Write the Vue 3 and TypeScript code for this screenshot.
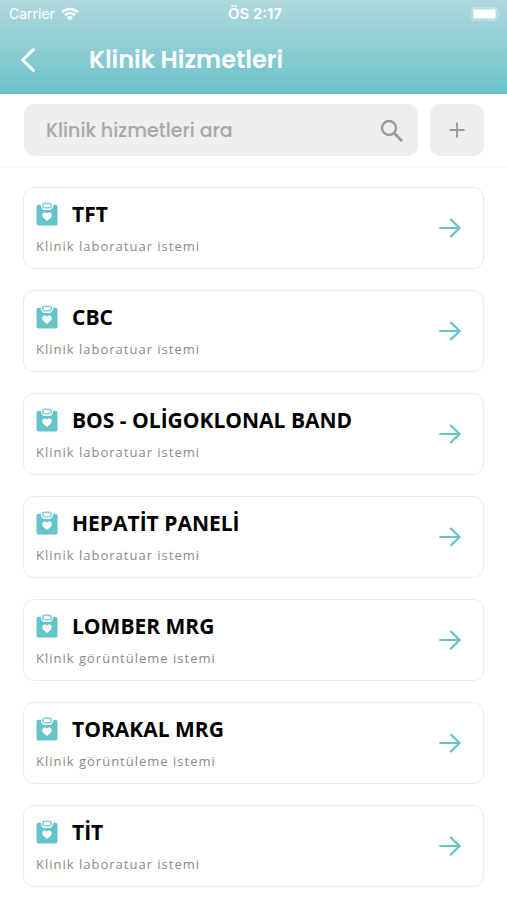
<script setup lang="ts">
import { ref, computed } from 'vue'

interface ClinicService {
  id: number
  name: string
  kind: string
}

const query = ref('')

const services: ClinicService[] = [
  { id: 1, name: 'TFT', kind: 'Klinik laboratuar istemi' },
  { id: 2, name: 'CBC', kind: 'Klinik laboratuar istemi' },
  { id: 3, name: 'BOS - OLİGOKLONAL BAND', kind: 'Klinik laboratuar istemi' },
  { id: 4, name: 'HEPATİT PANELİ', kind: 'Klinik laboratuar istemi' },
  { id: 5, name: 'LOMBER MRG', kind: 'Klinik görüntüleme istemi' },
  { id: 6, name: 'TORAKAL MRG', kind: 'Klinik görüntüleme istemi' },
  { id: 7, name: 'TİT', kind: 'Klinik laboratuar istemi' },
]

const visible = computed(() => {
  const q = query.value.trim().toLocaleLowerCase('tr')
  return services.filter((s) => s.name.toLocaleLowerCase('tr').includes(q))
})
</script>

<template>
  <div class="screen">
    <header class="header">
      <div class="status">
        <span class="carrier">
          Carrier
          <svg class="wifi" viewBox="0 0 18 14" aria-hidden="true">
            <path d="M1.2 5.2a11.2 11.2 0 0 1 15.6 0M4 8.2a7.2 7.2 0 0 1 10 0" fill="none" stroke="currentColor" stroke-width="2.5" />
            <path d="M9 13.6 5.9 10.4a4.4 4.4 0 0 1 6.2 0z" fill="currentColor" />
          </svg>
        </span>
        <span class="clock">ÖS 2:17</span>
        <svg class="battery" viewBox="0 0 30 14" aria-hidden="true">
          <rect x="0.8" y="0.8" width="25.4" height="12.4" rx="3.4" fill="none" stroke="#fff" stroke-opacity=".35" stroke-width="1.2" />
          <rect x="2.4" y="2.4" width="22.2" height="9.2" rx="1.4" fill="#fff" />
          <path d="M27.4 4.8c2 .8 2 3.6 0 4.4z" fill="#fff" fill-opacity=".4" />
        </svg>
      </div>
      <div class="bar">
        <button class="back" type="button" aria-label="Geri">
          <svg viewBox="0 0 16 26" aria-hidden="true">
            <path d="M13.4 2.6 2.6 13l10.8 10.4" fill="none" stroke="currentColor" stroke-width="3" stroke-linecap="round" stroke-linejoin="round" />
          </svg>
        </button>
        <h1 class="title">Klinik Hizmetleri</h1>
      </div>
    </header>

    <div class="search">
      <label class="field">
        <input v-model="query" class="input" type="text" placeholder="Klinik hizmetleri ara" aria-label="Klinik hizmetleri ara" />
        <svg class="lens" viewBox="0 0 24 24" aria-hidden="true">
          <circle cx="9" cy="10" r="7" fill="none" stroke="currentColor" stroke-width="2.4" />
          <path d="m14.2 15.2 8 8" stroke="currentColor" stroke-width="3" />
        </svg>
      </label>
      <button class="add" type="button" aria-label="Ekle">
        <svg viewBox="0 0 16 16" aria-hidden="true">
          <path d="M8 .4v15.2M.4 8h15.2" stroke="currentColor" stroke-width="1.9" />
        </svg>
      </button>
    </div>

    <main class="list">
      <a v-for="s in visible" :key="s.id" class="card" href="#">
        <span class="info">
          <span class="heading">
            <svg class="clip" viewBox="0 0 22 24" aria-hidden="true">
              <path d="M2.6 2.8h2.2C5 6.6 6.8 8 8.8 8h4.4c2 0 3.8-1.4 4-5.2h2.2c1.2 0 2.1.9 2.1 2.1v16.6c0 1.2-.9 2.1-2.1 2.1H2.6C1.4 23.6.5 22.7.5 21.5V4.9c0-1.2.9-2.1 2.1-2.1z" fill="#65c3ca" />
              <rect x="6" y=".6" width="10" height="6" rx="2.4" fill="#65c3ca" fill-opacity=".75" />
              <rect x="7.6" y="2.2" width="6.8" height="2.8" rx="1.1" fill="#fff" />
              <path d="M11 19c-2.5-1.8-4.8-3.5-4.8-5.9 0-2.6 3.4-3.5 4.8-1.3 1.4-2.2 4.8-1.3 4.8 1.3 0 2.4-2.3 4.1-4.8 5.9z" fill="#fff" />
            </svg>
            <span class="name">{{ s.name }}</span>
          </span>
          <span class="kind">{{ s.kind }}</span>
        </span>
        <svg class="arrow" viewBox="0 0 22 20" aria-hidden="true">
          <path d="M1.2 10h19M12 1.6l8.6 8.4-8.6 8.4" fill="none" stroke="currentColor" stroke-width="2.2" stroke-linecap="round" stroke-linejoin="round" />
        </svg>
      </a>
    </main>
  </div>
</template>

<style>
body {
  margin: 0;
  background: #fff;
}
</style>

<style scoped>
.screen {
  min-height: 100vh;
  box-sizing: border-box;
  background: #fff;
  font-family: "Open Sans", "Noto Sans", sans-serif;
}

svg {
  display: block;
  flex: none;
}

.header {
  background: linear-gradient(#b0d9de, #6bc2ca);
  color: #fff;
  padding-bottom: 6px;
}

.status {
  display: grid;
  grid-template-columns: 1fr auto 1fr;
  align-items: center;
  height: 28px;
  padding: 0 6px 0 9px;
  font: 400 14px/28px Inter, sans-serif;
}

.carrier {
  display: flex;
  align-items: center;
  gap: 6px;
}

.wifi {
  width: 18px;
  height: 14px;
}

.clock {
  font-size: 15px;
  font-weight: 600;
}

.battery {
  width: 30px;
  height: 14px;
  justify-self: end;
}

.bar {
  display: flex;
  align-items: center;
  gap: 53px;
  height: 60px;
  padding: 4px 20px 0;
  box-sizing: border-box;
}

.back {
  padding: 0;
  border: 0;
  background: none;
  color: inherit;
}

.back svg {
  width: 16px;
  height: 26px;
}

.title {
  margin: 0;
  font: 600 24px/32px Poppins, Inter, sans-serif;
}

.search {
  display: flex;
  gap: 12px;
  padding: 10px 23px 10px 24px;
  border-bottom: 2px solid #f7f7f7;
}

.field {
  flex: 1;
  min-width: 0;
  display: flex;
  align-items: center;
  height: 52px;
  padding: 0 14px 0 22px;
  box-sizing: border-box;
  border-radius: 10px;
  background: #eee;
  color: #9b9b9b;
}

.input {
  flex: 1;
  min-width: 0;
  padding: 2px 0 0;
  border: 0;
  outline: 0;
  background: none;
  color: #555;
  font: 500 19px/28px Poppins, Inter, sans-serif;
}

.input::placeholder {
  color: #a8a8a8;
  opacity: 1;
}

.lens {
  width: 24px;
  height: 24px;
}

.add {
  display: grid;
  place-items: center;
  width: 54px;
  padding: 0;
  border: 0;
  border-radius: 10px;
  background: #eee;
  color: #9b9b9b;
}

.add svg {
  width: 16px;
  height: 16px;
}

.list {
  display: flex;
  flex-direction: column;
  gap: 21px;
  padding: 19px 23px 14px;
}

.card {
  display: flex;
  align-items: center;
  justify-content: space-between;
  height: 82px;
  padding: 0 22px 0 12px;
  box-sizing: border-box;
  border: 1px solid #ececec;
  border-radius: 11px;
  color: #65c3ca;
  text-decoration: none;
}

.info {
  display: flex;
  flex-direction: column;
  gap: 8px;
}

.heading {
  display: flex;
  align-items: center;
  gap: 14px;
}

.clip {
  width: 22px;
  height: 24px;
}

.name {
  color: #000;
  font-size: 21px;
  font-weight: 700;
  line-height: 28px;
}

.kind {
  color: #8a8a8a;
  font-size: 13px;
  line-height: 20px;
  letter-spacing: 1px;
}

.arrow {
  width: 22px;
  height: 20px;
}
</style>
